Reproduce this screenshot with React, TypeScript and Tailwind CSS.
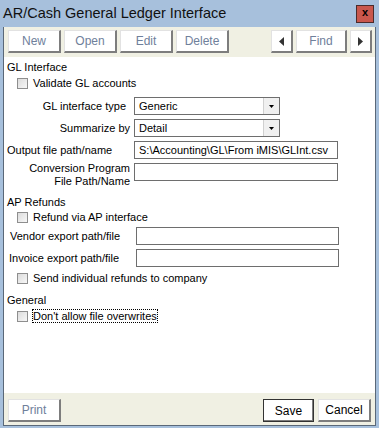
import React from "react"

const font = { fontFamily: '"Liberation Sans", Arial, sans-serif' }

function Btn({ label, w, dim, def }: { label?: string; w: string; dim?: boolean; def?: boolean }) {
    const edge = def
        ? "border border-[#333333] shadow-[inset_-1px_-1px_0_#7d7d7d]"
        : "border-t border-l border-t-[#e2e2e2] border-l-[#e2e2e2] border-r-2 border-b-2 border-r-[#7d7d7d] border-b-[#7d7d7d]"
    return (
        <div className={`${w} h-[23px] bg-white flex items-center justify-center text-[12px] ${edge} ${dim ? "text-[#6f809b]" : "text-black"}`}>
            {label}
        </div>
    )
}

function Arrow({ dir }: { dir: "l" | "r" }) {
    return (
        <div className="w-[22px] h-[23px] bg-white flex items-center justify-center border-t border-l border-t-[#e2e2e2] border-l-[#e2e2e2] border-r-2 border-b-2 border-r-[#7d7d7d] border-b-[#7d7d7d]">
            <svg width="5" height="9" viewBox="0 0 5 9">
                {dir === "l" ? <path d="M5 0 L0 4.5 L5 9 Z" fill="#333" /> : <path d="M0 0 L5 4.5 L0 9 Z" fill="#333" />}
            </svg>
        </div>
    )
}

function Check({ label, focus }: { label: string; focus?: boolean }) {
    return (
        <div className="flex items-center h-[14px] pl-[13px]">
            <div className="w-[11px] h-[11px] border border-[#8e8e8e] bg-gradient-to-br from-[#dcdcdc] to-[#f7f7f7]" />
            {focus ? (
                <span className="ml-[4px] leading-[12px] border border-dotted border-black">{label}</span>
            ) : (
                <span className="ml-[5px] leading-[13px]">{label}</span>
            )}
        </div>
    )
}

function Select({ value }: { value: string }) {
    return (
        <div className="ml-[4px] w-[146px] h-[18px] border border-[#6e6e6e] bg-white flex items-center">
            <span className="flex-1 pl-[4px]">{value}</span>
            <div className="w-[16px] h-[16px] bg-[#f0f0f0] border-l border-[#d0d0d0] flex items-center justify-center">
                <svg width="5" height="3" viewBox="0 0 5 3">
                    <path d="M0 0 L5 0 L2.5 3 Z" fill="#000" />
                </svg>
            </div>
        </div>
    )
}

function Input({ value, w }: { value?: string; w: string }) {
    return (
        <div className={`${w} h-[18px] border border-[#6e6e6e] bg-white flex items-center pl-[4px] whitespace-nowrap overflow-hidden`}>
            {value}
        </div>
    )
}

export default function App() {
    return (
        <div className="w-[379px] h-[428px] bg-[#a7c0dc] flex flex-col text-[11px] text-black" style={font}>
            <div className="h-[27px] flex items-center justify-between pl-[3px] pr-[5px]">
                <span className="text-[14.5px] text-[#111]">AR/Cash General Ledger Interface</span>
                <div className="w-[18px] h-[18px] bg-[#c9574c] border border-[#4b2b2b] flex items-center justify-center text-[11px] font-bold leading-none pb-[2px]">x</div>
            </div>
            <div className="flex-1 mx-[3px] mb-[2px] border border-t-0 border-[#5a6878] flex flex-col bg-white">
                <div className="h-[30px] bg-[#f0f0e3] flex items-start pt-[3px] pl-[4px] pr-[3px] gap-[3px]">
                    <Btn label="New" w="w-[53px]" dim />
                    <Btn label="Open" w="w-[53px]" dim />
                    <Btn label="Edit" w="w-[53px]" dim />
                    <Btn label="Delete" w="w-[53px]" dim />
                    <div className="flex-1" />
                    <Arrow dir="l" />
                    <Btn label="Find" w="w-[51px]" dim />
                    <Arrow dir="r" />
                </div>

                <div className="flex-1 flex flex-col">
                    <div className="mt-[3px] h-[14px] pl-[3px] leading-[14px]">GL Interface</div>
                    <div className="mt-[2px]"><Check label="Validate GL accounts" /></div>

                    <div className="mt-[7px] flex items-center h-[18px]">
                        <div className="w-[126px] text-right pr-[4px]">GL interface type</div>
                        <Select value="Generic" />
                    </div>
                    <div className="mt-[4px] flex items-center h-[18px]">
                        <div className="w-[126px] text-right">Summarize by</div>
                        <Select value="Detail" />
                    </div>
                    <div className="mt-[4px] flex items-center h-[18px]">
                        <div className="w-[126px] pl-[3px]">Output file path/name</div>
                        <div className="ml-[4px]"><Input w="w-[204px]" value="S:\Accounting\GL\From iMIS\GLInt.csv" /></div>
                    </div>
                    <div className="mt-[4px] flex items-center h-[18px]">
                        <div className="w-[126px] text-right leading-[13px] mt-[5px]">
                            Conversion Program
                            <br />
                            File Path/Name
                        </div>
                        <div className="ml-[4px]"><Input w="w-[204px]" /></div>
                    </div>

                    <div className="mt-[14px] h-[14px] pl-[3px] leading-[14px]">AP Refunds</div>
                    <div className="mt-[1px]"><Check label="Refund via AP interface" /></div>

                    <div className="mt-[3px] flex items-center h-[18px]">
                        <div className="w-[132px] pl-[6px]">Vendor export path/file</div>
                        <Input w="w-[203px]" />
                    </div>
                    <div className="mt-[4px] flex items-center h-[18px]">
                        <div className="w-[132px] pl-[5px]">Invoice export path/file</div>
                        <Input w="w-[203px]" />
                    </div>
                    <div className="mt-[4px]"><Check label="Send individual refunds to company" /></div>

                    <div className="mt-[8px] h-[14px] pl-[3px] leading-[14px]">General</div>
                    <div className="mt-[2px]"><Check label="Don't allow file overwrites" focus /></div>
                </div>

                <div className="h-[32px] bg-[#f0f0e3] flex items-start pt-[6px] pl-[4px] pr-[4px]">
                    <Btn label="Print" w="w-[53px]" dim />
                    <div className="flex-1" />
                    <Btn label="Save" w="w-[51px]" def />
                    <div className="w-[4px]" />
                    <Btn label="Cancel" w="w-[53px]" />
                </div>
            </div>
        </div>
    )
}
